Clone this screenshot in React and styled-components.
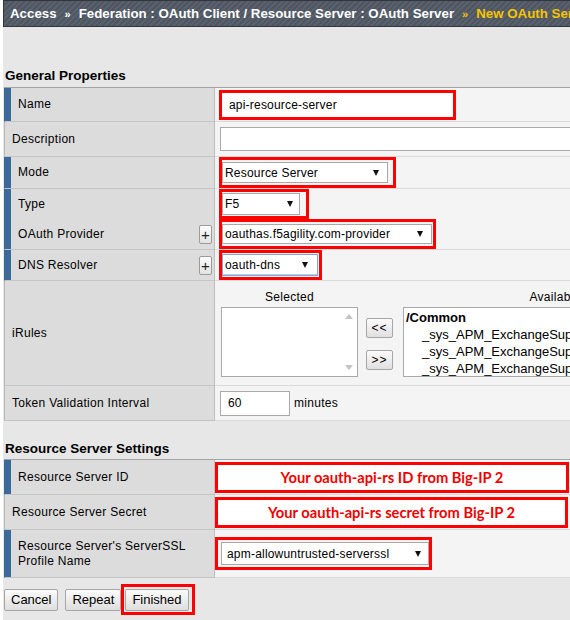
import React from "react";
import styled, { createGlobalStyle } from "styled-components";

const Global = createGlobalStyle`
  html, body { margin: 0; padding: 0; overflow: hidden; background: #fff; }
  body { font-family: "Liberation Sans", Arial, sans-serif; font-size: 12px; color: #000; }
`;

const Page = styled.div`
  margin-left: 3px;
  width: 760px;
  height: 620px;
  background: #e7e7e7;
`;

const Header = styled.div`
  height: 27px;
  box-sizing: border-box;
  border: 1px solid #31363d;
  background: repeating-linear-gradient(135deg, #59616d 0 2px, #4e5662 2px 4px);
  display: flex;
  align-items: center;
  padding-left: 6px;
  color: #fff;
  font-weight: bold;
  font-size: 13.3px;
  white-space: nowrap;
  overflow: hidden;
`;

const Crumb = styled.span`
  color: ${(p) => (p.$current ? "#f6c400" : "#fff")};
`;

const Sep = styled.span`
  margin: 0 8px;
  font-size: 11px;
  color: ${(p) => (p.$current ? "#f6c400" : "#fff")};
`;

const SectionTitle = styled.div`
  font-weight: bold;
  font-size: 13.5px;
  line-height: 16px;
  padding-left: 2px;
  margin-top: ${(p) => p.$top}px;
  margin-bottom: ${(p) => p.$bottom}px;
`;

const Table = styled.div`
  margin-left: 1px;
  border-top: 1px solid #a3a3a3;
`;

const Row = styled.div`
  display: grid;
  grid-template-columns: 211px 1fr;
  height: ${(p) => p.$h}px;
`;

const Label = styled.div`
  background: #dcdcdc;
  border-left: 1px solid ${(p) => (p.$req ? "#3b6a9a" : "#b8b8b8")};
  box-shadow: ${(p) => (p.$req ? "inset 6px 0 0 #3b6a9a" : "none")};
  border-right: 1px solid #bebebe;
  border-bottom: 1px solid #c4c4c4;
  padding-left: ${(p) => (p.$req ? 13 : 7)}px;
  padding-right: 2px;
  display: flex;
  align-items: center;
  justify-content: space-between;
  letter-spacing: 0.3px;
  line-height: 15px;
`;

const Value = styled.div`
  background: #f4f4f4;
  border-bottom: 1px solid #dadada;
  display: flex;
  align-items: ${(p) => (p.$top ? "flex-start" : "center")};
  padding-left: ${(p) => p.$pad ?? 4}px;
  min-width: 0;
`;

const RedBox = styled.div`
  display: inline-flex;
  align-items: center;
  box-sizing: border-box;
  border: 3px solid #ff0000;
  width: ${(p) => p.$w}px;
  height: ${(p) => p.$h}px;
  padding-left: ${(p) => p.$pl || 0}px;
  padding-right: ${(p) => p.$pr || 0}px;
  flex-shrink: 0;
`;

const TextField = styled.div`
  box-sizing: border-box;
  background: #fff;
  border: 1px solid ${(p) => (p.$plain ? "#fff" : "#a9a9a9")};
  width: ${(p) => (p.$w ? `${p.$w}px` : "100%")};
  height: ${(p) => (p.$h ? `${p.$h}px` : "100%")};
  display: flex;
  align-items: center;
  padding-left: ${(p) => p.$pl ?? 6}px;
  font-size: 12px;
  letter-spacing: 0.2px;
  flex-shrink: 0;
`;

const Annotation = styled.div`
  flex: 1;
  height: 100%;
  background: #fff;
  display: flex;
  align-items: center;
  justify-content: center;
  color: #f00000;
  font-family: Lato, "Open Sans", sans-serif;
  font-weight: bold;
  font-size: 14.7px;
`;

const Select = styled.div`
  box-sizing: border-box;
  width: ${(p) => p.$w}px;
  height: ${(p) => p.$h || 21}px;
  background: #fff;
  border: 1px solid ${(p) => (p.$focus ? "#7fa6d6" : "#a9a9a9")};
  box-shadow: ${(p) => (p.$focus ? "inset 0 -1px 0 #b9d0ee" : "none")};
  display: flex;
  align-items: center;
  justify-content: space-between;
  padding: 0 ${(p) => p.$pr || 7}px 0 ${(p) => p.$pl || 2}px;
  font-size: 12px;
  letter-spacing: 0.2px;
  flex-shrink: 0;
`;

const Arrow = styled.span`
  width: 0;
  height: 0;
  border-left: 3.5px solid transparent;
  border-right: 3.5px solid transparent;
  border-top: 6px solid #111;
`;

const PlusButton = styled.div`
  box-sizing: border-box;
  width: 13px;
  height: 19px;
  border: 1px solid #9b9b9b;
  border-radius: 2px;
  background: linear-gradient(#fdfdfd, #e3e3e3);
  display: flex;
  align-items: center;
  justify-content: center;
  font-size: 15px;
  line-height: 1;
  color: #222;
`;

const IRulesArea = styled.div`
  display: flex;
  align-items: flex-start;
  padding-top: 8px;
  padding-left: 2px;
`;

const ListColumn = styled.div`
  display: flex;
  flex-direction: column;
  align-items: center;
  gap: 2px;
  width: ${(p) => p.$w}px;
`;

const ListCaption = styled.div`
  line-height: 16px;
  font-size: 12px;
  letter-spacing: 0.3px;
`;

const ListBox = styled.div`
  box-sizing: border-box;
  width: 100%;
  height: 70px;
  background: #fff;
  border: 1px solid #a9a9a9;
  display: flex;
  overflow: hidden;
`;

const ListContent = styled.div`
  flex: 1;
  padding: 1px 0 0 2px;
  font-size: 13px;
  line-height: 17px;
  white-space: nowrap;
`;

const ListHead = styled.div`
  font-weight: bold;
`;

const ListItem = styled.div`
  padding-left: 16px;
`;

const ScrollTrack = styled.div`
  width: 16px;
  display: flex;
  flex-direction: column;
  justify-content: space-between;
  align-items: center;
  padding: 6px 0;
`;

const ScrollArrow = styled.span`
  width: 0;
  height: 0;
  border-left: 4px solid transparent;
  border-right: 4px solid transparent;
  ${(p) => (p.$up ? "border-bottom: 5px solid #c3c3c3;" : "border-top: 5px solid #c3c3c3;")}
`;

const MoveColumn = styled.div`
  display: flex;
  flex-direction: column;
  gap: 12px;
  margin: 29px 10px 0 8px;
`;

const SmallButton = styled.div`
  box-sizing: border-box;
  width: 27px;
  height: 20px;
  border: 1px solid #a6a6a6;
  border-radius: 2px;
  background: linear-gradient(#fbfbfb, #e0e0e0);
  display: flex;
  align-items: center;
  justify-content: center;
  font-size: 12px;
  letter-spacing: 1px;
`;

const Unit = styled.span`
  margin-left: 4px;
  letter-spacing: 0.3px;
`;

const Toolbar = styled.div`
  display: flex;
  align-items: center;
  margin-top: 6px;
  padding-left: 1px;
`;

const Button = styled.div`
  box-sizing: border-box;
  height: 22px;
  padding: 0 6px;
  border: 1px solid #a6a6a6;
  border-radius: 2px;
  background: linear-gradient(#fbfbfb, #dedede);
  display: flex;
  align-items: center;
  font-size: 13px;
  margin-right: ${(p) => p.$mr || 0}px;
`;

const ButtonMark = styled.div`
  box-sizing: border-box;
  border: 3px solid #ff0000;
  height: 31px;
  padding: 0 3px 0 1px;
  display: flex;
  align-items: center;
`;

export default function App() {
  return (
    <>
      <Global />
      <Page>
        <Header>
          <Crumb>Access</Crumb>
          <Sep>»</Sep>
          <Crumb>Federation : OAuth Client / Resource Server : OAuth Server</Crumb>
          <Sep $current>»</Sep>
          <Crumb $current>New OAuth Server...</Crumb>
        </Header>

        <SectionTitle $top={41} $bottom={3}>General Properties</SectionTitle>
        <Table>
          <Row $h={34}>
            <Label $req>Name</Label>
            <Value>
              <RedBox $w={237} $h={30}>
                <TextField $plain>api-resource-server</TextField>
              </RedBox>
            </Value>
          </Row>
          <Row $h={35}>
            <Label>Description</Label>
            <Value $pad={5}>
              <TextField $w={500} $h={24} />
            </Value>
          </Row>
          <Row $h={32}>
            <Label $req>Mode</Label>
            <Value>
              <RedBox $w={177} $h={31} $pr={5}>
                <Select $w={166} $pr={8}>
                  Resource Server <Arrow />
                </Select>
              </RedBox>
            </Value>
          </Row>
          <Row $h={30}>
            <Label $req>Type</Label>
            <Value>
              <RedBox $w={90} $h={30}>
                <Select $w={78} $h={22} $pr={6}>
                  F5 <Arrow />
                </Select>
              </RedBox>
            </Value>
          </Row>
          <Row $h={31}>
            <Label $req>
              OAuth Provider
              <PlusButton>+</PlusButton>
            </Label>
            <Value>
              <RedBox $w={217} $h={30}>
                <Select $w={210} $h={20} $pr={8}>
                  oauthas.f5agility.com-provider <Arrow />
                </Select>
              </RedBox>
            </Value>
          </Row>
          <Row $h={31}>
            <Label $req>
              DNS Resolver
              <PlusButton>+</PlusButton>
            </Label>
            <Value>
              <RedBox $w={103} $h={30}>
                <Select $w={96} $h={22} $pr={9} $focus>
                  oauth-dns <Arrow />
                </Select>
              </RedBox>
            </Value>
          </Row>
          <Row $h={105}>
            <Label>iRules</Label>
            <Value $top $pad={4}>
              <IRulesArea>
                <ListColumn $w={137}>
                  <ListCaption>Selected</ListCaption>
                  <ListBox>
                    <ListContent />
                    <ScrollTrack>
                      <ScrollArrow $up />
                      <ScrollArrow />
                    </ScrollTrack>
                  </ListBox>
                </ListColumn>
                <MoveColumn>
                  <SmallButton>&lt;&lt;</SmallButton>
                  <SmallButton>&gt;&gt;</SmallButton>
                </MoveColumn>
                <ListColumn $w={304}>
                  <ListCaption>Available</ListCaption>
                  <ListBox>
                    <ListContent>
                      <ListHead>/Common</ListHead>
                      <ListItem>_sys_APM_ExchangeSupport_OA_BasicAuth</ListItem>
                      <ListItem>_sys_APM_ExchangeSupport_OA_NtlmAuth</ListItem>
                      <ListItem>_sys_APM_ExchangeSupport_helper</ListItem>
                    </ListContent>
                  </ListBox>
                </ListColumn>
              </IRulesArea>
            </Value>
          </Row>
          <Row $h={35}>
            <Label>Token Validation Interval</Label>
            <Value $pad={5}>
              <TextField $w={70} $h={25} $pl={7}>60</TextField>
              <Unit>minutes</Unit>
            </Value>
          </Row>
        </Table>

        <SectionTitle $top={20} $bottom={2}>Resource Server Settings</SectionTitle>
        <Table>
          <Row $h={35}>
            <Label $req>Resource Server ID</Label>
            <Value $pad={0}>
              <RedBox $w={354} $h={31}>
                <Annotation>Your oauth-api-rs ID from Big-IP 2</Annotation>
              </RedBox>
            </Value>
          </Row>
          <Row $h={35}>
            <Label>Resource Server Secret</Label>
            <Value $pad={0}>
              <RedBox $w={353} $h={31}>
                <Annotation>Your oauth-api-rs secret from Big-IP 2</Annotation>
              </RedBox>
            </Value>
          </Row>
          <Row $h={48}>
            <Label $req>
              Resource Server's ServerSSL
              <br />
              Profile Name
            </Label>
            <Value $pad={0}>
              <RedBox $w={217} $h={33} $pl={3}>
                <Select $w={208} $h={23} $pl={5} $pr={7}>
                  apm-allowuntrusted-serverssl <Arrow />
                </Select>
              </RedBox>
            </Value>
          </Row>
        </Table>

        <Toolbar>
          <Button $mr={7}>Cancel</Button>
          <Button>Repeat</Button>
          <ButtonMark>
            <Button>Finished</Button>
          </ButtonMark>
        </Toolbar>
      </Page>
    </>
  );
}
